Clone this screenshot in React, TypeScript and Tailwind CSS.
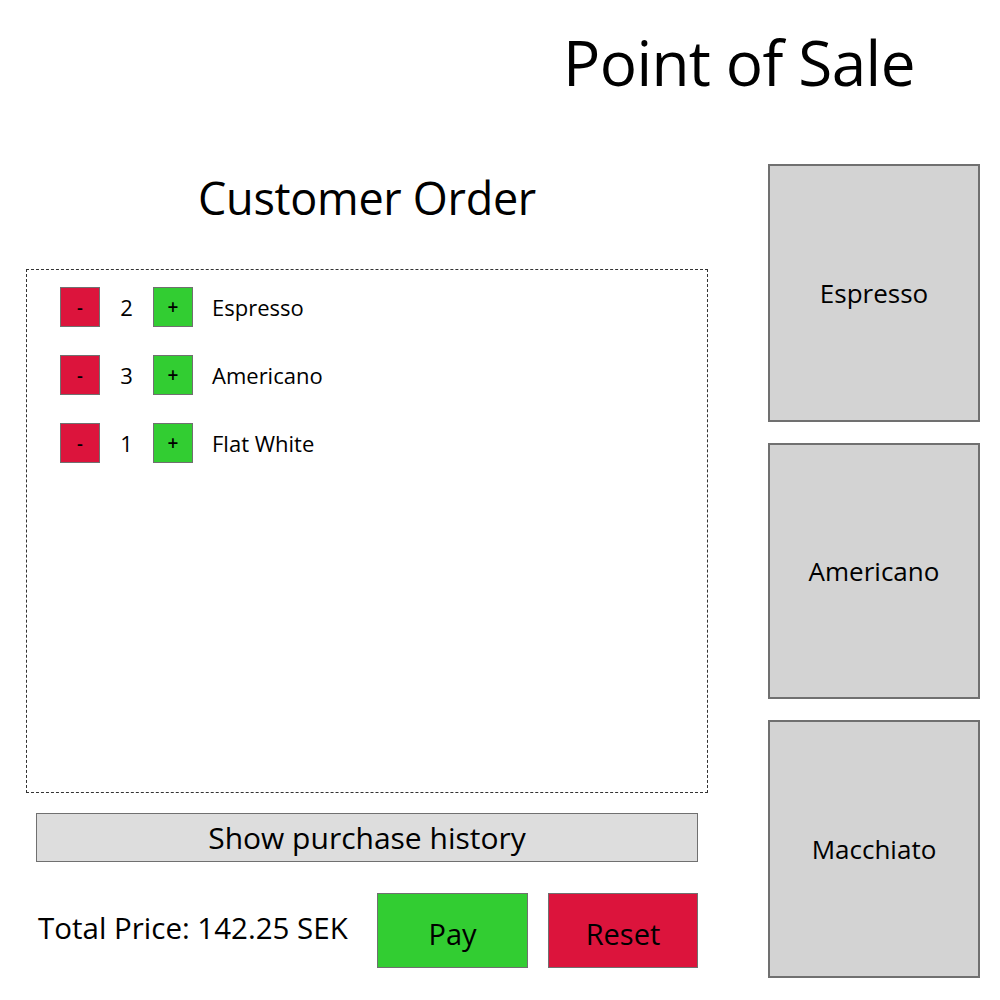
import React from "react";

type OrderLine = {
  name: string;
  qty: number;
};

const lines: OrderLine[] = [
  { name: "Espresso", qty: 2 },
  { name: "Americano", qty: 3 },
  { name: "Flat White", qty: 1 },
];

const products = ["Espresso", "Americano", "Macchiato"];

const OrderRow: React.FC<{ line: OrderLine }> = ({ line }) => {
  return (
    <div className="flex items-center h-[40px]">
      <button className="w-[40px] h-[40px] bg-[#dc143c] border border-[#707070] text-[18px] font-semibold leading-none text-black">
        -
      </button>
      <span className="w-[53px] text-center text-[22px] text-black">{line.qty}</span>
      <button className="w-[40px] h-[40px] bg-[#32cd32] border border-[#707070] text-[19px] font-semibold leading-none text-black">
        +
      </button>
      <span className="ml-[19px] text-[22px] text-black">{line.name}</span>
    </div>
  );
};

export default function App() {
  return (
    <div className="w-[1000px] h-[1000px] bg-white overflow-hidden font-['Open_Sans',sans-serif] text-black">
      <div className="h-[164px] pl-[563px] pt-[22px]">
        <h1 className="text-[62px] leading-[80px] tracking-[-0.6px]">Point of Sale</h1>
      </div>

      <div className="flex">
        <div className="w-[682px] ml-[26px] flex flex-col">
          <h2 className="h-[105px] pt-[4px] text-center text-[45px] leading-[60px] tracking-[-0.3px]">
            Customer Order
          </h2>
          <div className="h-[524px] border border-dashed border-[#333] pt-[17px] pl-[33px] flex flex-col gap-[28px]">
            {lines.map((line) => (
              <OrderRow key={line.name} line={line} />
            ))}
          </div>
          <button className="mt-[20px] ml-[10px] w-[662px] h-[49px] bg-[#dddddd] border border-[#707070] text-[30px] leading-none">
            Show purchase history
          </button>
          <div className="mt-[31px] flex items-center">
            <span className="ml-[12px] w-[339px] text-[29.5px] leading-none -mt-[6px]">Total Price: 142.25 SEK</span>
            <button className="w-[151px] h-[75px] pt-[5px] bg-[#32cd32] border border-[#707070] text-[29px] leading-none">
              Pay
            </button>
            <button className="ml-[20px] w-[150px] h-[75px] pt-[5px] bg-[#dc143c] border border-[#707070] text-[29px] leading-none">
              Reset
            </button>
          </div>
        </div>

        <div className="ml-[60px] w-[212px] flex flex-col gap-[21px]">
          {products.map((p, i) => (
            <button
              key={p}
              className={
                "w-[212px] bg-[#d3d3d3] border-2 border-[#707070] text-[26px] leading-none " +
                (i === 1 ? "h-[256px]" : "h-[258px]")
              }
            >
              {p}
            </button>
          ))}
        </div>
      </div>
    </div>
  );
}
